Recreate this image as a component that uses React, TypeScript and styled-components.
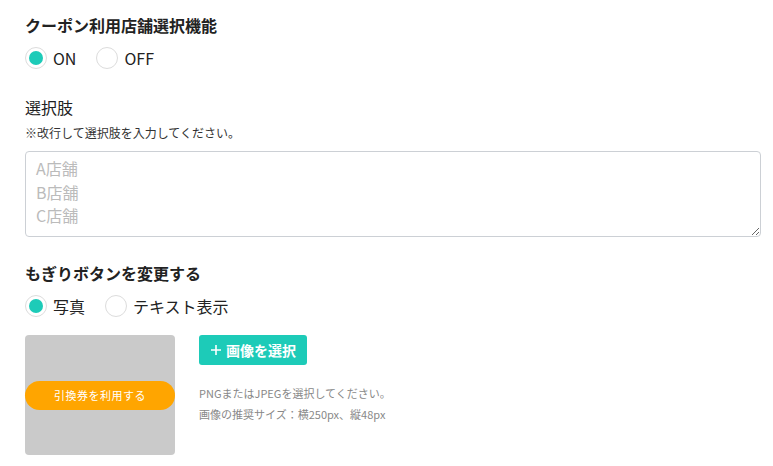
import React from "react";
import styled, { createGlobalStyle } from "styled-components";

const Global = createGlobalStyle`
  body { margin: 0; background: #fff; font-family: "Noto Sans CJK JP", "Noto Sans", sans-serif; color: #222; }
`;

const Page = styled.div`
  padding: 13px 12px 0 25px;
  display: flex;
  flex-direction: column;
`;

const Heading = styled.h2<{ $mt?: number }>`
  margin: ${(p) => p.$mt ?? 0}px 0 0;
  font-size: 16px;
  font-weight: 700;
  line-height: 24px;
  color: #222;
`;

const SubHeading = styled.h3<{ $mt?: number }>`
  margin: ${(p) => p.$mt ?? 0}px 0 0;
  font-size: 16px;
  font-weight: 400;
  line-height: 24px;
  color: #222;
`;

const Note = styled.p`
  margin: 5px 0 0;
  font-size: 12px;
  line-height: 18px;
  color: #333;
`;

const RadioGroup = styled.div`
  display: flex;
  align-items: center;
  gap: 20px;
  margin-top: 10px;
`;

const RadioLabel = styled.label`
  display: flex;
  align-items: center;
  gap: 6px;
  font-size: 16px;
  line-height: 22px;
  color: #222;
`;

const RadioCircle = styled.span<{ $on?: boolean }>`
  width: 22px;
  height: 22px;
  box-sizing: border-box;
  border-radius: 50%;
  border: 1px solid #dcdcdc;
  background: #fff;
  display: flex;
  align-items: center;
  justify-content: center;
  &::after {
    content: "";
    width: 14px;
    height: 14px;
    border-radius: 50%;
    background: ${(p) => (p.$on ? "#1dcbb8" : "transparent")};
  }
`;

const TextArea = styled.textarea`
  margin-top: 9px;
  box-sizing: border-box;
  width: 736px;
  height: 86px;
  border: 1px solid #ccd0d5;
  border-radius: 4px;
  padding: 5px 10px;
  font-family: "Noto Sans CJK JP", "Noto Sans", sans-serif;
  font-size: 16px;
  line-height: 23.5px;
  color: #222;
  resize: vertical;
  &::placeholder { color: #bbb; }
`;

const UploadRow = styled.div`
  display: flex;
  gap: 24px;
  margin-top: 18px;
`;

const Preview = styled.div`
  width: 150px;
  height: 120px;
  background: #cacaca;
  border-radius: 4px;
  display: flex;
  align-items: center;
`;

const Pill = styled.div`
  width: 100%;
  height: 29px;
  border-radius: 15px;
  background: #ffa500;
  color: #fff;
  font-size: 11px;
  display: flex;
  align-items: center;
  justify-content: center;
  letter-spacing: 0.5px;
`;

const Side = styled.div`
  display: flex;
  flex-direction: column;
  align-items: flex-start;
`;

const PickButton = styled.button`
  height: 30px;
  padding: 0 11px;
  border: none;
  border-radius: 3px;
  background: #1dcbb8;
  color: #fff;
  font-family: "Noto Sans CJK JP", "Noto Sans", sans-serif;
  font-size: 14px;
  font-weight: 700;
  display: flex;
  align-items: center;
  gap: 4px;
`;

const Help = styled.p<{ $mt: number }>`
  margin: ${(p) => p.$mt}px 0 0;
  font-size: 11px;
  line-height: 14px;
  color: #888;
`;

export default function App() {
  return (
    <>
      <Global />
      <Page>
        <Heading>クーポン利用店舗選択機能</Heading>
        <RadioGroup>
          <RadioLabel><RadioCircle $on />ON</RadioLabel>
          <RadioLabel><RadioCircle />OFF</RadioLabel>
        </RadioGroup>
        <SubHeading $mt={26}>選択肢</SubHeading>
        <Note>※改行して選択肢を入力してください。</Note>
        <TextArea placeholder={"A店舗\nB店舗\nC店舗"} />
        <Heading $mt={24}>もぎりボタンを変更する</Heading>
        <RadioGroup>
          <RadioLabel><RadioCircle $on />写真</RadioLabel>
          <RadioLabel><RadioCircle />テキスト表示</RadioLabel>
        </RadioGroup>
        <UploadRow>
          <Preview><Pill>引換券を利用する</Pill></Preview>
          <Side>
            <PickButton>
              <svg width="12" height="12" viewBox="0 0 12 12"><path d="M6 1v10M1 6h10" stroke="#fff" strokeWidth="1.6" /></svg>
              画像を選択
            </PickButton>
            <Help $mt={21}>PNGまたはJPEGを選択してください。</Help>
            <Help $mt={7}>画像の推奨サイズ：横250px、縦48px</Help>
          </Side>
        </UploadRow>
      </Page>
    </>
  );
}
